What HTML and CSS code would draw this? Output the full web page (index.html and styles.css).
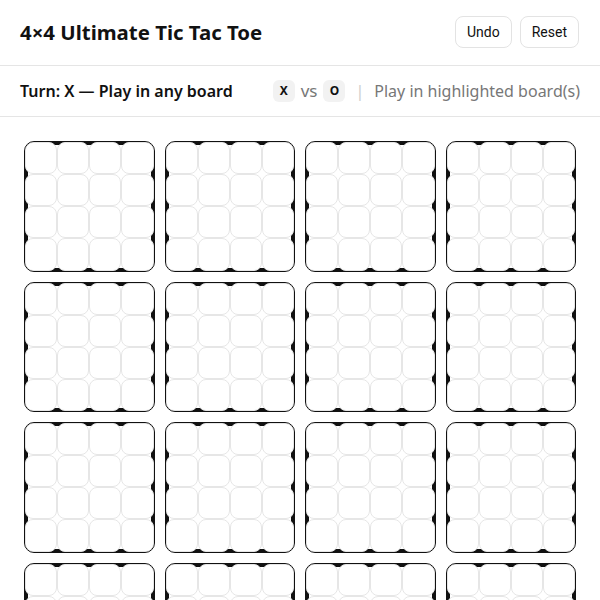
FILE: index.html
```html
<!DOCTYPE html>
<html>
<head>
<meta charset="utf-8">
<link rel="stylesheet" href="styles.css">
</head>
<body>
<header class="top">
  <h1 class="title">4×4 Ultimate Tic Tac Toe</h1>
  <div class="actions">
    <button class="btn">Undo</button>
    <button class="btn">Reset</button>
  </div>
</header>
<div class="status">
  <div class="turn">Turn: X — Play in any board</div>
  <div class="legend">
    <span class="badge">X</span>
    <span class="vs">vs</span>
    <span class="badge">O</span>
    <span class="sep">|</span>
    <span class="hint">Play in highlighted board(s)</span>
  </div>
</div>
<main class="grid" id="grid"></main>
<script>
  var grid = document.getElementById('grid');
  for (var b = 0; b < 16; b++) {
    var board = document.createElement('div');
    board.className = 'board';
    for (var c = 0; c < 16; c++) {
      var cell = document.createElement('div');
      cell.className = 'cell';
      board.appendChild(cell);
    }
    grid.appendChild(board);
  }
</script>
</body>
</html>
```
FILE: styles.css
```css
* { box-sizing: border-box; }
html, body { margin: 0; padding: 0; background: #fff; }
body { font-family: "Noto Sans", "Open Sans", sans-serif; color: #111; }
.top {
  display: flex; align-items: center; justify-content: space-between;
  padding: 16px 21px 17px 20px; border-bottom: 1px solid #e5e5e5;
}
.title { margin: 0; font-size: 20.4px; font-weight: 700; line-height: 32px; }
.actions { display: flex; gap: 8px; }
.btn {
  font-family: Roboto, "Noto Sans", sans-serif; font-size: 14px; color: #111;
  background: #fff; border: 1px solid #e3e3e3; border-radius: 8px;
  height: 32px; padding: 0 11px; line-height: 30px;
}
.status {
  display: flex; align-items: center; justify-content: space-between;
  padding: 13px 20px; border-bottom: 1px solid #e5e5e5; line-height: 24px;
}
.turn { font-size: 16px; font-weight: 600; }
.legend { display: flex; align-items: center; gap: 6px; font-size: 16px; color: #777; }
.badge {
  display: inline-flex; align-items: center; justify-content: center;
  width: 22px; height: 22px; border-radius: 6px; background: #f2f2f2;
  font-size: 12px; font-weight: 700; color: #111;
}
.vs { color: #777; font-size: 17px; }
.sep { color: #ccc; margin: 0 4px; }
.hint { color: #777; }
.grid {
  display: grid; grid-template-columns: repeat(4, 1fr); gap: 10px;
  padding: 24px;
}
.board {
  display: grid; grid-template-columns: repeat(4, 1fr);
  border: 1px solid #111; border-radius: 10px; overflow: hidden;
  box-shadow: inset 0 0 0 3px #111; background: #fff;
}
.cell {
  aspect-ratio: 1 / 1; background: #fff;
  border: 1px solid #e6e6e6; border-radius: 8px;
}
```
